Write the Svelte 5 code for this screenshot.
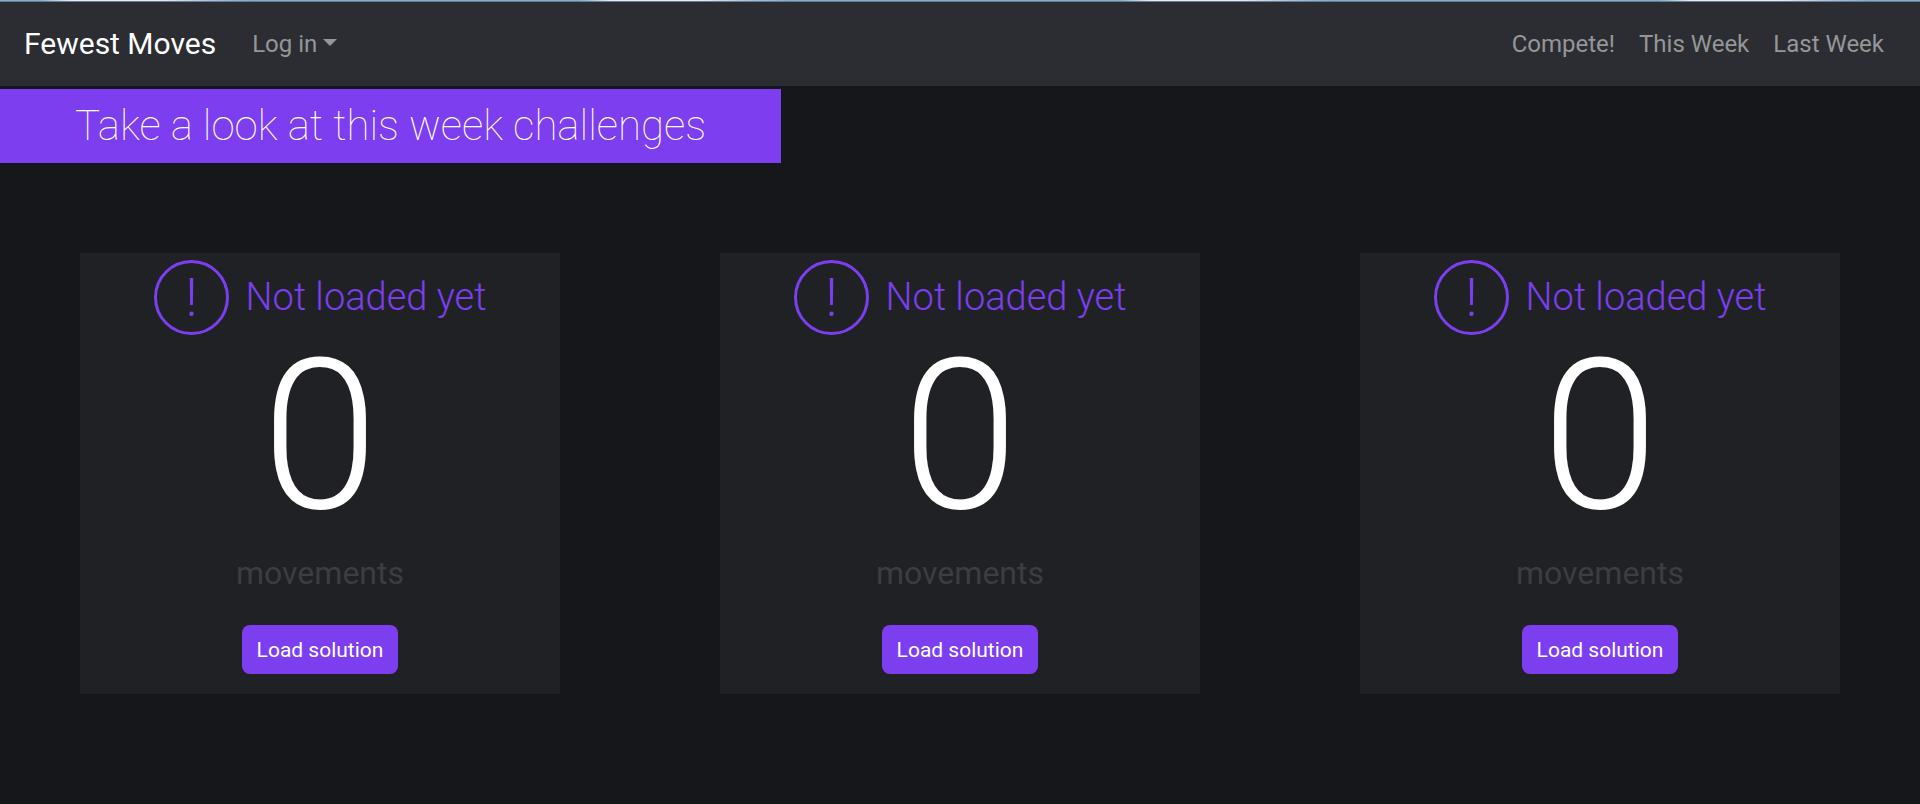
<script>
  const challenges = $state([
    { id: 1, moves: 0 },
    { id: 2, moves: 0 },
    { id: 3, moves: 0 },
  ]);
  const links = ['Compete!', 'This Week', 'Last Week'];
</script>

<div class="page">
  <div class="strip"></div>
  <header class="navbar">
    <a class="brand" href="#home">Fewest Moves</a>
    <button class="nav-link" type="button" aria-haspopup="true">
      Log in <span class="caret"></span>
    </button>
    <nav>
      {#each links as link}
        <a class="nav-link" href="#{link.toLowerCase().replace(/\W+/g, '')}">{link}</a>
      {/each}
    </nav>
  </header>

  <h1>Take a look at this week challenges</h1>

  <main>
    {#each challenges as challenge (challenge.id)}
      <section class="card">
        <div class="status">
          <svg width="75" height="75" viewBox="0 0 75 75" aria-hidden="true">
            <circle cx="37.5" cy="37.5" r="36" fill="none" stroke="currentColor" stroke-width="3" />
            <path d="M35.8 18h3.4l-.3 27h-2.8z" fill="currentColor" />
            <circle cx="37.5" cy="53.8" r="2.2" fill="currentColor" />
          </svg>
          <h2>Not loaded yet</h2>
        </div>
        <p class="count">{challenge.moves}</p>
        <p class="unit">movements</p>
        <button class="load" type="button">Load solution</button>
      </section>
    {/each}
  </main>
</div>

<style>
  :global(body) {
    margin: 0;
    background: #16171b;
  }
  .page {
    font-family: Roboto, sans-serif;
    color: #fff;
  }
  .strip {
    height: 1px;
    border-bottom: 1px solid #5f8096;
    background: repeating-linear-gradient(
      90deg,
      #86a9c8 0,
      #86a9c8 40px,
      #eceae6 70px,
      #eceae6 160px,
      #b4c0dc 205px,
      #86a9c8 250px,
      #86a9c8 540px
    );
  }
  .navbar {
    display: flex;
    align-items: center;
    min-height: 84px;
    padding: 0 24px;
    box-sizing: border-box;
    background: #2c2d32;
  }
  .brand {
    margin-right: 24px;
    font-size: 30px;
    line-height: 44px;
    color: #fff;
    text-decoration: none;
  }
  .nav-link {
    padding: 12px;
    border: 0;
    background: none;
    font: 400 24px/36px Roboto, sans-serif;
    color: #959698;
    text-decoration: none;
    white-space: nowrap;
  }
  .caret {
    display: inline-block;
    border: 7px solid transparent;
    border-top-color: currentColor;
    border-bottom: 0;
    vertical-align: 6px;
  }
  nav {
    display: flex;
    margin-left: auto;
  }
  h1 {
    width: fit-content;
    margin: 3px 0 0;
    padding: 0 75px;
    background: #7c3eee;
    font-size: 42px;
    font-weight: 100;
    line-height: 74px;
  }
  main {
    display: grid;
    grid-template-columns: repeat(3, 1fr);
    margin-top: 90px;
  }
  .card {
    display: flex;
    flex-direction: column;
    align-items: center;
    width: 75%;
    margin: 0 auto;
    padding: 7px 0 20px;
    box-sizing: border-box;
    background: #202125;
  }
  .status {
    display: flex;
    align-items: center;
    gap: 17px;
    color: #7c3eee;
  }
  h2 {
    margin: 0;
    padding-bottom: 2px;
    font-size: 38px;
    font-weight: 300;
    line-height: 48px;
  }
  p {
    margin: 0;
  }
  .count {
    font-size: 210px;
    font-weight: 300;
    line-height: 202px;
  }
  .unit {
    margin: 12px 0 28px;
    font-size: 32px;
    line-height: 48px;
    color: #3c3d43;
  }
  .load {
    padding: 9px 15px 7px;
    border: 0;
    border-radius: 8px;
    background: #7c3eee;
    color: #fff;
    font: 400 21px/33px Roboto, sans-serif;
  }
</style>
